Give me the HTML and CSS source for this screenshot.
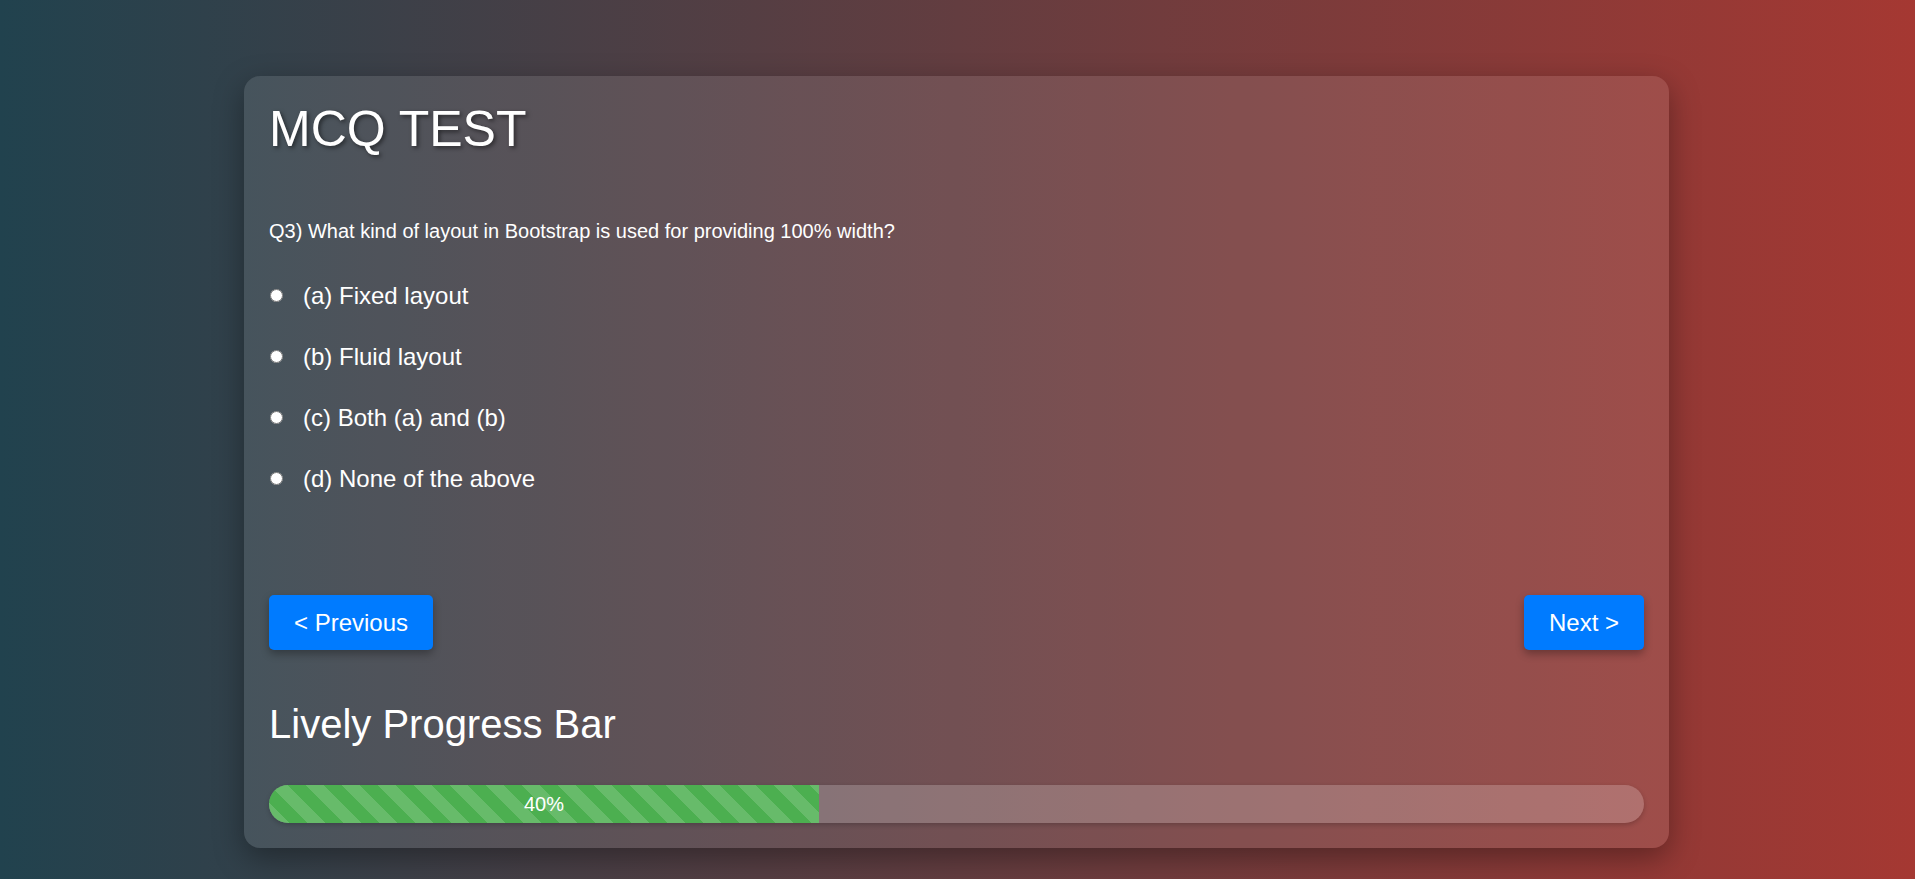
FILE: index.html
```html
<!DOCTYPE html>
<html lang="en">
<head>
<meta charset="utf-8">
<title>MCQ TEST</title>
<link rel="stylesheet" href="styles.css">
</head>
<body>
<main class="card">
  <h1 class="title">MCQ TEST</h1>
  <p class="question">Q3) What kind of layout in Bootstrap is used for providing 100% width?</p>
  <div class="options">
    <label class="option"><input type="radio" name="q3" class="radio"><span>(a) Fixed layout</span></label>
    <label class="option"><input type="radio" name="q3" class="radio"><span>(b) Fluid layout</span></label>
    <label class="option"><input type="radio" name="q3" class="radio"><span>(c) Both (a) and (b)</span></label>
    <label class="option"><input type="radio" name="q3" class="radio"><span>(d) None of the above</span></label>
  </div>
  <div class="nav">
    <button class="btn">&lt; Previous</button>
    <button class="btn">Next &gt;</button>
  </div>
  <h2 class="subtitle">Lively Progress Bar</h2>
  <div class="track">
    <div class="fill" style="width: 40%">40%</div>
  </div>
</main>
</body>
</html>
```
FILE: styles.css
```css
* { box-sizing: border-box; }
html, body { margin: 0; padding: 0; }
body {
  min-height: 879px;
  padding: 76px 2px 0 0;
  font-family: "Liberation Sans", Arial, sans-serif;
  color: #fff;
  background: linear-gradient(to right, #21424e 0%, #a53832 100%);
}
.card {
  width: 1425px;
  margin: 0 auto;
  padding: 25px;
  border-radius: 16px;
  background: rgba(255, 255, 255, 0.1);
  box-shadow: 0 10px 30px rgba(0, 0, 0, 0.35);
}
.title {
  margin: 0;
  font-size: 50px;
  font-weight: normal;
  line-height: 56px;
  text-shadow: 2px 2px 4px rgba(0, 0, 0, 0.5);
}
.question {
  margin: 63px 0 0;
  font-size: 20px;
  line-height: 23px;
}
.options {
  margin-top: 22px;
  display: flex;
  flex-direction: column;
}
.option {
  height: 61px;
  display: flex;
  align-items: center;
  font-size: 24px;
  line-height: 28px;
}
.radio {
  width: 13px;
  height: 13px;
  margin: 0 20px 0 1px;
}
.nav {
  margin-top: 86px;
  display: flex;
  justify-content: space-between;
}
.btn {
  font-family: "Liberation Sans", Arial, sans-serif;
  font-size: 24px;
  line-height: 27px;
  height: 55px;
  padding: 0 25px;
  border: none;
  border-radius: 5px;
  color: #fff;
  background: #007bff;
  box-shadow: 0 4px 8px rgba(0, 0, 0, 0.3);
}
.subtitle {
  margin: 51px 0 0;
  font-size: 40px;
  font-weight: normal;
  line-height: 46px;
}
.track {
  margin-top: 38px;
  height: 38px;
  border-radius: 19px;
  overflow: hidden;
  background: rgba(255, 255, 255, 0.2);
  box-shadow: 0 2px 5px rgba(0, 0, 0, 0.2);
}
.fill {
  height: 100%;
  display: flex;
  align-items: center;
  justify-content: center;
  font-size: 20px;
  background-color: #4caf50;
  background-image: linear-gradient(45deg, rgba(255,255,255,0.15) 25%, transparent 25%, transparent 50%, rgba(255,255,255,0.15) 50%, rgba(255,255,255,0.15) 75%, transparent 75%, transparent);
  background-size: 36px 36px;
}
```
